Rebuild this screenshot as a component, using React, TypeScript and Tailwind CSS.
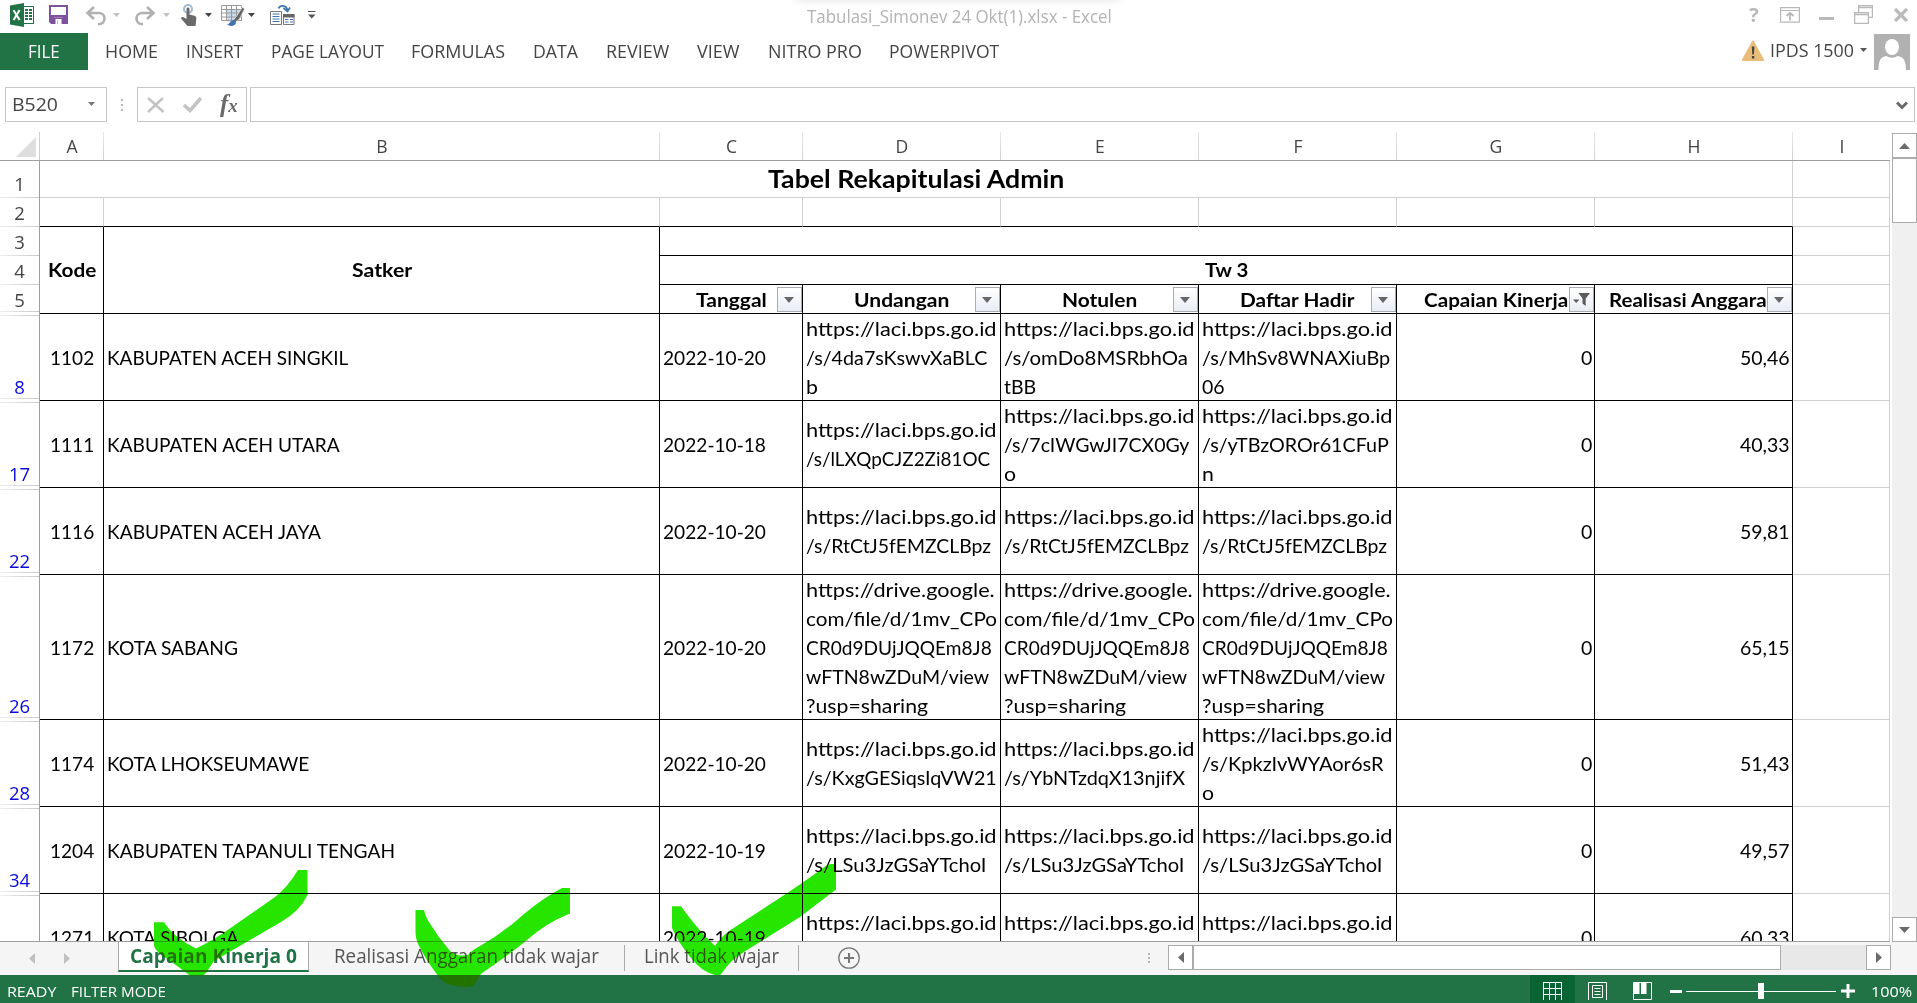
import { useLayoutEffect, useRef, useState, type ReactNode } from 'react';

/* Text condensed or widened to an exact advance width. */
function Fit({ w, children, className = '' }: { w: number; children: ReactNode; className?: string }) {
  const ref = useRef<HTMLSpanElement>(null);
  const [scale, setScale] = useState(1);
  useLayoutEffect(() => {
    if (ref.current) setScale(w / ref.current.offsetWidth);
  }, [w]);
  return (
    <span className={`inline-block whitespace-nowrap text-left ${className}`} style={{ width: w }}>
      <span ref={ref} className="inline-block origin-left" style={{ transform: `scaleX(${scale})` }}>
        {children}
      </span>
    </span>
  );
}

function Caret({ className = '' }: { className?: string }) {
  return (
    <svg viewBox="0 0 7 4" className={`h-1 w-[7px] shrink-0 ${className}`} fill="currentColor">
      <path d="M0 0h7L3.5 4z" />
    </svg>
  );
}

function QuickAccess() {
  return (
    <div className="flex h-full items-center pl-2.5">
      <svg viewBox="0 0 24 24" className="-mt-1 size-6">
        <rect x="12.5" y="3.5" width="11" height="17" fill="#fff" stroke="#217346" />
        <path d="M15 6h3v2h-3zM19 6h3v2h-3zM15 9h3v2h-3zM19 9h3v2h-3zM15 12h3v2h-3zM19 12h3v2h-3zM15 15h3v2h-3zM19 15h3v2h-3z" fill="#217346" />
        <path d="M0 2.5L14 0v24L0 21.5z" fill="#217346" />
        <path d="M3.6 7.2L9.6 17M9.6 7L3.6 17" stroke="#fff" strokeWidth="2.1" />
      </svg>
      <svg viewBox="0 0 19 19" className="-mt-1 ml-[15px] size-[19px]">
        <path d="M0 0h19v19H2l-2-2z" fill="#7f52a0" />
        <path d="M2 2h15v8H2zM5 12.500h9V19H5z" fill="#fff" />
        <path d="M5 12.500h9V19h-2v-4H9v4H5z" fill="#7f52a0" />
        <path d="M6.500 14h6v5h-2v-3.500H8.500V19h-2z" fill="#fff" />
      </svg>
      <svg viewBox="0 0 21 20" className="-mt-0.5 ml-[17px] h-5 w-[21px]" fill="none" stroke="#b1b1b1" strokeWidth="2.6">
        <path d="M2 7h11.500c4 0 6 2.500 6 5.500s-2 5.800-6.500 5.800M9 1L2.500 7 9 13" />
      </svg>
      <Caret className="ml-[7px] -mt-1 text-[#c0c0c0]" />
      <svg viewBox="0 0 21 20" className="-mt-0.5 ml-[15px] h-5 w-[21px] -scale-x-100" fill="none" stroke="#b1b1b1" strokeWidth="2.600">
        <path d="M2 7h11.500c4 0 6 2.500 6 5.500s-2 5.800-6.500 5.800M9 1L2.500 7 9 13" />
      </svg>
      <Caret className="ml-[7px] -mt-1 text-[#c0c0c0]" />
      <svg viewBox="0 0 16 22" className="-mt-1 ml-[11px] h-[22px] w-4">
        <circle cx="7" cy="5" r="4" fill="none" stroke="#a6bdd6" strokeWidth="2.200" />
        <path d="M5.500 5c0-2 3-2 3 0v5.500l5 1.300c1.500.5 2 1.500 1.800 3L14.500 22H6.500L0 14.500c.5-1.500 2-1.800 3.500-.8l2 1.300z" fill="#6a6a6a" />
      </svg>
      <Caret className="ml-2 -mt-1 text-[#444]" />
      <svg viewBox="0 0 24 23" className="-mt-0.5 ml-[9px] h-[23px] w-6">
        <path d="M6 5.500h15v8h-6v4H6z" fill="#c9d8ea" />
        <path d="M.5 1.500h20v15H.5zM.5 5.500h20M.5 9h20M.5 13h20M5.500 1.500v15M10.500 1.500v15M15.500 1.500v15" fill="none" stroke="#9a9a9a" />
        <path d="M23.500 5l-5 10-4.500 3.500L12.500 16l3.500-4.500L21.500 3z" fill="#666" stroke="#fff" strokeWidth=".6" />
        <path d="M6 20.500c3 0 3-4.500 6.500-4.500 2.500 0 3 2 2 4-1.500 2.500-6 2.500-8.500.5z" fill="#3f74b0" />
      </svg>
      <Caret className="ml-[3px] -mt-1 text-[#444]" />
      <svg viewBox="0 0 25 22" className="-mt-1 ml-[15px] h-[22px] w-[25px]" fill="none">
        <path d="M.5 7.500h11v13H.5z" stroke="#777" />
        <path d="M2.500 10h7M2.500 12.500h7M2.500 15h7M2.500 17.500h7" stroke="#3f74b0" />
        <path d="M13.500 10.500h10.500v10H13.500z" stroke="#777" />
        <path d="M13 10h11.500v3.500H13z" fill="#666" />
        <path d="M15 15.500h3.500M20 15.500h3M15 18h3.500M20 18h3" stroke="#3f74b0" />
        <path d="M8.500 4.500C10 1 16 .5 17.500 6M13.500 4l4 3.500L20 3.500" stroke="#3f74b0" strokeWidth="1.700" />
      </svg>
      <svg viewBox="0 0 8 8" className="-mt-1 ml-[13px] size-2 text-[#555]">
        <path d="M0 .5h7.500" stroke="currentColor" />
        <path d="M0 3.500h7.500L3.800 7.500z" fill="currentColor" />
      </svg>
    </div>
  );
}

function WindowButtons() {
  return (
    <div className="flex h-full items-center text-[#b9b9b9]">
      <span className="w-[10px] text-center font-['Open_Sans'] text-[20px] leading-none font-bold -translate-y-[2px]">?</span>
      <svg viewBox="0 0 20 16" className="ml-[21px] -mt-1 h-4 w-5" fill="none" stroke="currentColor">
        <path d="M.6.600h18.800v14.600H.6zM.6 3.500h18.800" strokeWidth="1.200" />
        <path d="M10 13.500V6M6.500 9L10 5.800 13.500 9" strokeWidth="1.800" />
      </svg>
      <span className="mt-1 ml-[19px] h-[3px] w-[15px] bg-[#b9b9b9]" />
      <svg viewBox="0 0 19 19" className="ml-5 -mt-1 size-[19px]" fill="none" stroke="currentColor">
        <path d="M4.600 7V.6h13.800v11.800H14M4.600 2.500h13.800M.6 7.600h13.800v10.800H.6zM.6 9.500h13.800" strokeWidth="1.300" />
      </svg>
      <svg viewBox="0 0 14 14" className="ml-[21px] -mt-1 size-3.5" stroke="currentColor" strokeWidth="3.200">
        <path d="M1 1l12 12M13 1L1 13" />
      </svg>
    </div>
  );
}

const ribbon: { label: string; w: number; ml: string }[] = [
  { label: 'HOME', w: 53, ml: 'ml-[17px]' },
  { label: 'INSERT', w: 57, ml: 'ml-7' },
  { label: 'PAGE LAYOUT', w: 113, ml: 'ml-7' },
  { label: 'FORMULAS', w: 94, ml: 'ml-[27px]' },
  { label: 'DATA', w: 45, ml: 'ml-7' },
  { label: 'REVIEW', w: 63, ml: 'ml-7' },
  { label: 'VIEW', w: 43, ml: 'ml-7' },
  { label: 'NITRO PRO', w: 94, ml: 'ml-7' },
  { label: 'POWERPIVOT', w: 110, ml: 'ml-[27px]' },
];

function Ribbon() {
  return (
    <div className="flex h-[37px] items-center text-[18.5px] text-[#444]">
      <div className="flex h-full w-[88px] items-center justify-center bg-[#217346] pb-0.5 text-white">
        <Fit w={32}>FILE</Fit>
      </div>
      <div className="flex items-center pb-0.5">
        {ribbon.map((t) => (
          <Fit key={t.label} w={t.w} className={t.ml}>
            {t.label}
          </Fit>
        ))}
      </div>
      <div className="ml-auto flex h-full items-center pr-[7px]">
        <svg viewBox="0 0 24 22" className="-mt-0.5 h-[22px] w-6">
          <path d="M11 1.200Q12 0 13 1.200L23.300 20Q23.500 21 22 21H2Q.5 21 .7 20z" fill="#e8bd7a" />
          <path d="M10.800 6.500h2.600l-.5 8h-1.600zM10.900 16h2.400v2.500h-2.400z" fill="#444" />
        </svg>
        <Fit w={84} className="-mt-[3px] ml-[5px]">IPDS 1500</Fit>
        <Caret className="-mt-1 ml-1.5 text-[#555]" />
        <svg viewBox="0 0 36 36" className="ml-[7px] size-9 bg-[#b1b1b1]" fill="#fff">
          <ellipse cx="18" cy="13" rx="7" ry="8" />
          <path d="M4.500 36c0-9 2-13.500 8-14 3 2.200 8 2.200 11 0 6 .5 8.500 5 8.500 14z" />
        </svg>
      </div>
    </div>
  );
}

function FormulaBar() {
  return (
    <div className="mt-[17px] flex h-[35px] pl-[5px] text-[#444]">
      <div className="flex w-[102px] items-center justify-between border border-[#c6c6c6] pr-[11px] pl-[6px] text-[19px]">
        <Fit w={46}>B520</Fit>
        <Caret className="-mt-0.5 text-[#777]" />
      </div>
      <div className="flex w-[30px] flex-col items-center justify-center gap-[3px]">
        <i className="size-0.5 bg-[#b5b5b5]" />
        <i className="size-0.5 bg-[#b5b5b5]" />
        <i className="size-0.5 bg-[#b5b5b5]" />
      </div>
      <div className="flex w-[110px] items-center border border-[#c6c6c6] pl-[9px]">
        <svg viewBox="0 0 18 16" className="h-4 w-[18px]" stroke="#c3c3c3" strokeWidth="2.400">
          <path d="M1 1l15.500 14M16 1L1 15" />
        </svg>
        <svg viewBox="0 0 19 16" className="ml-[18px] h-4 w-[19px]" fill="none" stroke="#c3c3c3" strokeWidth="3.600">
          <path d="M1 8l6 5.500L18 1" />
        </svg>
        <span className="-mt-[3px] ml-[18px] font-['Liberation_Serif'] text-[25px] leading-none font-bold text-[#6a6a6a] italic">
          f<span className="text-[19px]">x</span>
        </span>
      </div>
      <div className="ml-[3px] flex w-[1665px] items-center justify-end border border-[#c6c6c6] pr-[6px]">
        <svg viewBox="0 0 12 9" className="mt-0.5 h-[9px] w-3" fill="none" stroke="#6a6a6a" strokeWidth="3">
          <path d="M1 1.500l5 5 5-5" />
        </svg>
      </div>
    </div>
  );
}

const columns = ['A', 'B', 'C', 'D', 'E', 'F', 'G', 'H', 'I'];

function ColumnHeaders() {
  return (
    <div className="grid h-[29px] grid-cols-[40px_64px_556px_143px_repeat(5,198px)_97px] text-center text-[18.5px] leading-[28px] text-[#444]">
      <div className="flex items-center justify-end border-r border-[#cfcfcf] pr-[3px]">
        <svg viewBox="0 0 20 20" className="size-5" fill="#dedede">
          <path d="M20 0v20H0z" />
        </svg>
      </div>
      {columns.map((c) => (
        <div key={c} className="flex">
          <span className="flex-1 translate-x-[0.5px] scale-x-95">{c}</span>
          {c !== 'I' && <i className="w-px bg-linear-to-b from-[#e8e8e8] to-[#cfcfcf]" />}
        </div>
      ))}
    </div>
  );
}

/* Row header strip: n, height of the block, and whether hidden rows follow it. */
const rowHeads: { n: string; h: string; blue?: boolean; gap?: boolean }[] = [
  { n: '1', h: 'h-[37px]' },
  { n: '2', h: 'h-[29px]' },
  { n: '3', h: 'h-[29px]' },
  { n: '4', h: 'h-[29px]' },
  { n: '5', h: 'h-[27px]', gap: true },
  { n: '8', h: 'h-[83px]', blue: true, gap: true },
  { n: '17', h: 'h-[83px]', blue: true, gap: true },
  { n: '22', h: 'h-[83px]', blue: true, gap: true },
  { n: '26', h: 'h-[141px]', blue: true, gap: true },
  { n: '28', h: 'h-[83px]', blue: true, gap: true },
  { n: '34', h: 'h-[83px]', blue: true, gap: true },
];

function Fade() {
  return <i className="block h-px w-full shrink-0 bg-linear-to-r from-[#efefef] to-[#c9c9c9]" />;
}

function RowHeaders() {
  return (
    <div className="flex w-[40px] shrink-0 flex-col border-r border-[#9f9f9f] text-center text-[18.5px] text-[#444]">
      {rowHeads.map((r) => (
        <div key={r.n} className="shrink-0">
          <div className={`flex flex-col justify-end ${r.h}`}>
            <span className={`${r.blue ? 'text-[#0a0ad8]' : ''} ${r.gap ? 'leading-[23px]' : 'leading-[26px]'}`}>{r.n}</span>
            <Fade />
          </div>
          {r.gap && (
            <div className="flex h-1 flex-col justify-end">
              <Fade />
            </div>
          )}
        </div>
      ))}
    </div>
  );
}

type Line = [string, number];
const laci: Line = ['https://laci.bps.go.id', 191];
const drive: Line[] = [
  ['https://drive.google.', 189],
  ['com/file/d/1mv_CPo', 191],
  ['CR0d9DUjJQQEm8J8', 186],
  ['wFTN8wZDuM/view', 183],
  ['?usp=sharing', 122],
];
const rtc: Line[] = [laci, ['/s/RtCtJ5fEMZCLBpz', 185]];
const lsu: Line[] = [laci, ['/s/LSu3JzGSaYTchoI', 181]];
const cut: Line[] = [laci];

const rows: { kode: string; satker: Line; date: string; links: Line[][]; val: string }[] = [
  {
    kode: '1102',
    satker: ['KABUPATEN ACEH SINGKIL', 241],
    date: '2022-10-20',
    links: [
      [laci, ['/s/4da7sKswvXaBLC', 182], ['b', 12]],
      [laci, ['/s/omDo8MSRbhOa', 184], ['tBB', 32]],
      [laci, ['/s/MhSv8WNAXiuBp', 188], ['06', 23]],
    ],
    val: '50,46',
  },
  {
    kode: '1111',
    satker: ['KABUPATEN ACEH UTARA', 233],
    date: '2022-10-18',
    links: [
      [laci, ['/s/lLXQpCJZ2Zi81OC', 184]],
      [laci, ['/s/7cIWGwJI7CX0Gy', 185], ['o', 12]],
      [laci, ['/s/yTBzOROr61CFuP', 187], ['n', 12]],
    ],
    val: '40,33',
  },
  { kode: '1116', satker: ['KABUPATEN ACEH JAYA', 214], date: '2022-10-20', links: [rtc, rtc, rtc], val: '59,81' },
  { kode: '1172', satker: ['KOTA SABANG', 131], date: '2022-10-20', links: [drive, drive, drive], val: '65,15' },
  {
    kode: '1174',
    satker: ['KOTA LHOKSEUMAWE', 202],
    date: '2022-10-20',
    links: [
      [laci, ['/s/KxgGESiqsIqVW21', 191]],
      [laci, ['/s/YbNTzdqX13njifX', 181]],
      [laci, ['/s/KpkzIvWYAor6sR', 181], ['o', 12]],
    ],
    val: '51,43',
  },
  { kode: '1204', satker: ['KABUPATEN TAPANULI TENGAH', 288], date: '2022-10-19', links: [lsu, lsu, lsu], val: '49,57' },
  { kode: '1271', satker: ['KOTA SIBOLGA', 132], date: '2022-10-19', links: [cut, cut, cut], val: '60,33' },
];

const heads: { t: string; w: number; active?: boolean }[] = [
  { t: 'Tanggal', w: 71 },
  { t: 'Undangan', w: 95 },
  { t: 'Notulen', w: 75 },
  { t: 'Daftar Hadir', w: 115 },
  { t: 'Capaian Kinerja', w: 144, active: true },
  { t: 'Realisasi Anggaran', w: 169 },
];

const black = 'border-r border-b border-black';
const light = 'border-r border-b border-[#d0d0d0]';

function FilterButton({ active }: { active?: boolean }) {
  return (
    <span className="absolute right-0 bottom-[1px] flex h-[25px] w-[25px] items-center justify-center border border-[#a9acb0] bg-linear-to-b from-white to-[#e9edf3] pr-px">
      {active ? (
        <svg viewBox="0 0 17 13" className="h-[13px] w-[17px]" fill="#5c5c5c">
          <path d="M5.500 0H17l-4.300 5.500V13L9.500 10.500v-5zM0 6.500h6.500L3.200 10z" />
        </svg>
      ) : (
        <svg viewBox="0 0 10 6" className="h-1.5 w-2.5" fill="#666">
          <path d="M0 0h10L5 6z" />
        </svg>
      )}
    </span>
  );
}

function Sheet() {
  return (
    <div className="grid w-[1850px] shrink-0 grid-cols-[64px_556px_143px_repeat(5,198px)_97px] grid-rows-[37px_29px_29px_29px_29px_87px_87px_87px_145px_87px_87px_87px] font-['Lato',sans-serif] text-[19.5px] leading-[29px] text-black">
      <div className={`col-span-8 flex items-center justify-center pb-0.5 text-[24px] font-bold ${light}`}>
        <Fit w={296}>Tabel Rekapitulasi Admin</Fit>
      </div>
      <div className={light} />
      {columns.map((c) => (
        <div key={c} className={c < 'I' ? 'border-r border-b border-r-[#d0d0d0] border-b-black' : light} />
      ))}

      <div className={`row-span-3 flex items-center justify-center pb-0.5 font-bold ${black}`}>
        <Fit w={48}>Kode</Fit>
      </div>
      <div className={`row-span-3 flex items-center justify-center pb-0.5 font-bold ${black}`}>
        <Fit w={60}>Satker</Fit>
      </div>
      <div className={`col-span-6 ${black}`} />
      <div className={light} />
      <div className={`col-span-6 flex justify-center font-bold leading-[27px] ${black}`}>
        <Fit w={43}>Tw 3</Fit>
      </div>
      <div className={light} />
      {heads.map((h) => (
        <div key={h.t} className={`relative flex justify-center font-bold ${black}`}>
          <Fit w={h.w}>{h.t}</Fit>
          <FilterButton active={h.active} />
        </div>
      ))}
      <div className={light} />

      {rows.map((r) => (
        <Row key={r.kode} r={r} />
      ))}
    </div>
  );
}

function Row({ r }: { r: (typeof rows)[number] }) {
  return (
    <>
      <div className={`flex items-center justify-center ${black}`}>
        <Fit w={44}>{r.kode}</Fit>
      </div>
      <div className={`flex items-center pl-[3px] ${black}`}>
        <Fit w={r.satker[1]}>{r.satker[0]}</Fit>
      </div>
      <div className={`flex items-center pl-[3px] ${black}`}>
        <Fit w={103}>{r.date}</Fit>
      </div>
      {r.links.map((lines, i) => (
        <div key={i} className={`flex flex-col pl-[3px] ${lines.length === 1 ? 'pt-[14px]' : 'justify-center'} ${black}`}>
          {lines.map(([t, w]) => (
            <Fit key={t} w={w}>
              {t}
            </Fit>
          ))}
        </div>
      ))}
      <div className={`flex items-center justify-end pr-[2px] ${black}`}>
        <Fit w={11}>0</Fit>
      </div>
      <div className={`flex items-center justify-end pr-[2px] ${black}`}>
        <Fit w={50}>{r.val}</Fit>
      </div>
      <div className={light} />
    </>
  );
}

function VerticalScrollbar() {
  return (
    <div className="ml-[2px] flex w-[25px] flex-col bg-[#f0f0f0]">
      <div className="flex h-[25px] items-center justify-center border border-[#ababab] bg-white">
        <svg viewBox="0 0 11 6" className="h-1.5 w-[11px]" fill="#6a6a6a">
          <path d="M0 6h11L5.500 0z" />
        </svg>
      </div>
      <div className="h-[65px] border border-[#ababab] bg-white" />
      <div className="mt-auto flex h-[25px] items-center justify-center border border-[#ababab] bg-white">
        <svg viewBox="0 0 11 6" className="h-1.5 w-[11px]" fill="#6a6a6a">
          <path d="M0 0h11L5.500 6z" />
        </svg>
      </div>
    </div>
  );
}

function SheetTabs() {
  return (
    <div className="flex h-[33px] bg-[#f5f5f5] text-[19.5px] text-[#555]">
      <div className="flex w-[118px] items-center gap-[29px] pl-[29px]">
        <svg viewBox="0 0 6 11" className="h-[11px] w-1.5" fill="#c0c0c0">
          <path d="M6 0v11L0 5.500z" />
        </svg>
        <svg viewBox="0 0 6 11" className="h-[11px] w-1.5" fill="#c0c0c0">
          <path d="M0 0v11l6-5.500z" />
        </svg>
      </div>
      <div className="-mt-px flex h-[31px] w-[191px] items-center justify-center border-x border-b-2 border-x-[#ababab] border-b-[#217346] bg-white font-bold text-[#217346]">
        <Fit w={167}>Capaian Kinerja 0</Fit>
      </div>
      <div className="flex h-[28px] items-center pl-[25px]">
        <Fit w={265}>Realisasi Anggaran tidak wajar</Fit>
      </div>
      <i className="mt-[3px] ml-[25px] h-[26px] w-px bg-[#ababab]" />
      <div className="flex h-[28px] items-center pl-[19px]">
        <Fit w={135}>Link tidak wajar</Fit>
      </div>
      <i className="mt-[3px] ml-[19px] h-[26px] w-px bg-[#ababab]" />
      <svg viewBox="0 0 22 22" className="mt-[5px] ml-[39px] size-[22px]" fill="none" stroke="#777">
        <circle cx="11" cy="11" r="10.200" strokeWidth="1.300" />
        <path d="M11 6v10M6 11h10" strokeWidth="2" />
      </svg>
      <div className="ml-auto flex">
        <div className="mt-[11px] mr-[18px] flex flex-col gap-[2px]">
          <i className="size-0.5 bg-[#b5b5b5]" />
          <i className="size-0.5 bg-[#b5b5b5]" />
          <i className="size-0.5 bg-[#b5b5b5]" />
        </div>
        <div className="mt-[3px] mr-[26px] flex h-[25px] w-[723px] bg-[#e8e8e8]">
          <div className="flex w-[25px] items-center justify-center border border-[#ababab] bg-white">
            <svg viewBox="0 0 6 11" className="h-[11px] w-1.5" fill="#6a6a6a">
              <path d="M6 0v11L0 5.500z" />
            </svg>
          </div>
          <div className="w-[588px] border border-[#ababab] bg-white" />
          <div className="ml-auto flex w-[25px] items-center justify-center border border-[#ababab] bg-white">
            <svg viewBox="0 0 6 11" className="h-[11px] w-1.5" fill="#6a6a6a">
              <path d="M0 0v11l6-5.500z" />
            </svg>
          </div>
        </div>
      </div>
    </div>
  );
}

function StatusBar() {
  return (
    <div className="flex h-[28px] items-center bg-[#217346] pr-[5px] pl-[7px] text-[15px] text-white">
      <Fit w={49} className="mt-1">READY</Fit>
      <Fit w={95} className="mt-1 ml-[15px]">FILTER MODE</Fit>
      <div className="ml-auto flex h-full items-center">
        <div className="flex h-full w-[45px] items-center justify-center bg-[#0a6332]">
          <svg viewBox="0 0 19 18" className="mt-1 h-[18px] w-[19px]" fill="none" stroke="#fff">
            <path d="M.5.500h18M.5 6.500h18M.5 12.500h18M.5 0v18M6.500 0v18M12.500 0v18M18.500 0v18" />
          </svg>
        </div>
        <svg viewBox="0 0 19 18" className="mt-1 ml-[13px] h-[18px] w-[19px]" fill="none" stroke="#fff">
          <path d="M.5 18V.5h18V18M4.500 15.500v-12h10v12zM6.500 6.500h6M6.500 9.500h6M6.500 12.500h6" />
        </svg>
        <svg viewBox="0 0 19 18" className="mt-1 ml-[26px] h-[18px] w-[19px]" fill="none" stroke="#fff">
          <path d="M.5.500h18v17H.5z" />
          <path d="M1 1h5.500v11H1zM8 1h5.500v11H8z" fill="#fff" stroke="none" />
        </svg>
        <i className="mt-1 ml-[18px] h-[3px] w-[12px] bg-white" />
        <div className="mt-1 ml-[4px] flex h-4 w-[150px] items-center">
          <i className="h-px w-[72px] bg-white" />
          <i className="h-4 w-[6px] bg-white" />
          <i className="h-px flex-1 bg-white" />
        </div>
        <svg viewBox="0 0 14 14" className="mt-1 ml-[5px] size-3.5" stroke="#fff" strokeWidth="3">
          <path d="M7 0v14M0 7h14" />
        </svg>
        <Fit w={41} className="mt-1 ml-[16px]">100%</Fit>
      </div>
    </div>
  );
}

/* Highlighter ticks drawn across the sheet tabs. */
function HighlighterTicks() {
  return (
    <svg viewBox="140 860 710 130" className="pointer-events-none absolute top-[860px] left-[140px] h-[130px] w-[710px] mix-blend-darken" fill="#26e600">
      <path d="M154 922.300H164Q174 938 196 948.500Q214 940 232 927L275 897Q287 888 298 870H307.500V895Q300 911 281 922L214 961L206 973L203 975.500H190Q176 965 159 953Q154 948 154 945Z" />
      <path d="M415.500 910H424Q426 918 429 922Q438 937 450 951Q456 957 468 955Q472 950 480 946Q503 933 524 914Q543 898 562 888H570V913.500Q546 923 527 940Q505 958 482 973Q479 976 475 984Q472 987 468 987Q445 987 439 977Q427 962 418 944Q415.500 938 415.500 933Z" />
      <path d="M672 906.300H681Q698 930 715 946Q720 938 729 931L775 901Q803 883 827 865L831 864H836V889.500L800 917L747 950Q730 960 722 973L720 975H715Q702 972 691 958Q678 942 672 928Z" />
    </svg>
  );
}

export default function App() {
  return (
    <div className="relative flex h-[1003px] w-[1917px] flex-col overflow-hidden bg-white font-['Open_Sans',sans-serif]">
      <div className="pointer-events-none absolute -top-2 left-[795px] h-2 w-[325px] shadow-[0_0_10px_rgba(0,0,0,0.12)]" />
      <div className="flex h-[33px] shrink-0 items-center">
        <QuickAccess />
        <div className="ml-[491px] flex-1 text-[17.5px] text-[#b3b3b3]">
          <Fit w={305}>Tabulasi_Simonev 24 Okt(1).xlsx - Excel</Fit>
        </div>
        <div className="mr-[9px] h-full">
          <WindowButtons />
        </div>
      </div>
      <Ribbon />
      <FormulaBar />
      <div className="mt-[9px] flex h-[811px] shrink-0">
        <div className="w-[1890px]">
          <div className="mt-px h-[29px]">
            <ColumnHeaders />
          </div>
          <div className="relative -mt-px flex h-[782px] overflow-hidden border-y border-y-[#9f9f9f]">
            <RowHeaders />
            <Sheet />
          </div>
        </div>
        <div className="mt-[2px] flex">
          <VerticalScrollbar />
        </div>
      </div>
      <SheetTabs />
      <StatusBar />
      <HighlighterTicks />
    </div>
  );
}
